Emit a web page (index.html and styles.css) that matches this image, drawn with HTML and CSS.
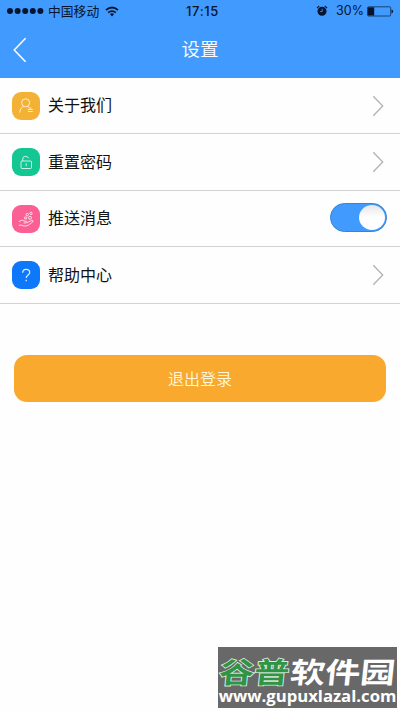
FILE: index.html
```html
<!DOCTYPE html>
<html lang="zh-CN">
<head>
<meta charset="utf-8">
<title>设置</title>
<link rel="stylesheet" href="styles.css">
</head>
<body>
<header class="header">
  <div class="status">
    <div class="status-left">
      <svg class="signal" width="37" height="8" viewBox="0 0 37 8"><circle cx="3" cy="4" r="3"/><circle cx="10.6" cy="4" r="3"/><circle cx="18.2" cy="4" r="3"/><circle cx="25.8" cy="4" r="3"/><circle cx="33.4" cy="4" r="3"/></svg>
      <span class="carrier">中国移动</span>
      <svg class="wifi" width="14" height="11" viewBox="0 0 14 11" fill="none" stroke="#06142f" stroke-width="1.7"><path d="M1 4Q7-1 13 4M3.2 6.6Q7 3.5 10.8 6.6"/><path d="M4.9 8.1Q7 6.5 9.1 8.1L7 10.4Z" fill="#06142f" stroke="none"/></svg>
    </div>
    <time class="clock">17:15</time>
    <div class="status-right">
      <svg class="alarm" width="12" height="12" viewBox="0 0 12 12" fill="none"><circle cx="6" cy="6.2" r="4.5" fill="#06142f"/><path d="M.9 3.2 3.2 1M11.1 3.2 8.8 1" stroke="#06142f" stroke-width="1.1"/><path d="M6.2 3.8V6.6H4.2" stroke="#419bff" stroke-width=".9"/></svg>
      <span class="percent">30%</span>
      <svg class="battery" width="27" height="11" viewBox="0 0 27 11"><rect x=".5" y=".8" width="23.2" height="9.2" rx="1" fill="none" stroke="#19406f"/><path d="M1 1.3h6.2v8.2H1z"/><path d="M24.5 3.6q1.6 0 1.6 1.8t-1.6 1.8z"/></svg>
    </div>
  </div>
  <nav class="navbar">
    <svg class="back" width="14" height="26" viewBox="0 0 14 26" fill="none" stroke="#fff" stroke-width="1.5"><path d="M12.6 1.2 1.2 13 12.6 24.8"/></svg>
    <h1 class="title">设置</h1>
  </nav>
</header>
<main>
  <ul class="list">
    <li class="row">
      <span class="icon icon-about"><svg width="28" height="28" viewBox="0 0 28 28"><circle cx="13.6" cy="10.8" r="4"/><path d="M7.6 20.6Q7.6 16.2 11.6 14.4M15.6 14.4 17.2 15.6M15.8 17.5h5M15.8 19.5h5M17 16h2.5"/></svg></span>
      <span class="label">关于我们</span>
      <svg class="chevron" width="12" height="22" viewBox="0 0 12 22"><path d="M1.3 1.3 10.7 11 1.3 20.7"/></svg>
    </li>
    <li class="row">
      <span class="icon icon-password"><svg width="28" height="28" viewBox="0 0 28 28"><rect x="9" y="13" width="10.5" height="7.5" rx="1"/><path d="M10.8 13V10.7Q10.8 8.3 13.6 8.3 16 8.3 16.3 10.3M14.2 15.2v3"/></svg></span>
      <span class="label">重置密码</span>
      <svg class="chevron" width="12" height="22" viewBox="0 0 12 22"><path d="M1.3 1.3 10.7 11 1.3 20.7"/></svg>
    </li>
    <li class="row">
      <span class="icon icon-push"><svg width="28" height="28" viewBox="0 0 28 28"><path d="M6.8 16.8 9 15.4Q10.6 14.8 12 16L14.4 16.3Q15.8 16.8 14.5 17.8L11.6 18M15.2 17.5 19.8 15.5Q21.8 15.4 20.7 17L16 20.4Q13.8 21.5 11.4 20.8L9 20 6.8 20.4"/><circle cx="13.6" cy="13" r="1.2"/><circle cx="18" cy="12.8" r="1.5"/><circle cx="15.2" cy="9.6" r="1.2"/><circle cx="19" cy="8.4" r="1.2"/></svg></span>
      <span class="label">推送消息</span>
      <span class="toggle"><span class="knob"></span></span>
    </li>
    <li class="row">
      <span class="icon icon-help"><svg width="28" height="28" viewBox="0 0 28 28"><path d="M10.7 11.7Q10.7 8.3 14.2 8.3T17.7 11.4C17.7 13.9 14.2 14 14.2 17.1M14.2 18.8v1.5" stroke-width="1.3"/></svg></span>
      <span class="label">帮助中心</span>
      <svg class="chevron" width="12" height="22" viewBox="0 0 12 22"><path d="M1.3 1.3 10.7 11 1.3 20.7"/></svg>
    </li>
  </ul>
  <button class="logout" type="button">退出登录</button>
</main>
<footer class="brand">
  <div class="brand-name"><span class="brand-green">谷普</span><span>软件园</span></div>
  <div class="brand-url">www.gupuxlazal.com</div>
</footer>
</body>
</html>
```
FILE: styles.css
```css
* { box-sizing: border-box; }
body {
  margin: 0;
  width: 400px;
  height: 711px;
  display: flex;
  flex-direction: column;
  overflow: hidden;
  background: #fefefe;
  color: #111;
  font-family: "Liberation Sans", "Noto Sans CJK SC", sans-serif;
}
svg { display: block; flex: none; }
.header { height: 78px; background: #419bff; }
.status {
  height: 22px;
  display: grid;
  grid-template-columns: 1fr auto 1fr;
  align-items: center;
  padding: 0 6px 0 7px;
  color: #06142f;
  fill: #06142f;
}
.status-left, .status-right { display: flex; align-items: center; }
.status-right { justify-content: flex-end; }
.carrier { margin-left: 4px; font-size: 12.8px; line-height: 20px; padding-top: 1px; }
.wifi { margin-left: 6px; }
.clock {
  font: 500 13px/20px Inter, sans-serif;
  letter-spacing: .6px;
  padding-left: 4px;
}
.percent { margin: 0 3px 0 8px; font: 12.5px/20px Inter, sans-serif; }
.navbar {
  height: 56px;
  display: grid;
  grid-template-columns: 1fr auto 1fr;
  align-items: center;
  padding: 0 13px;
}
.title {
  margin: 0;
  color: #fff;
  font-size: 18.5px;
  font-weight: 350;
  line-height: 28px;
}
.list { margin: 0; padding: 0; list-style: none; }
.row {
  height: 57px;
  display: flex;
  align-items: center;
  padding: 0 13px 0 12px;
  border-bottom: 1px solid #d2d2d2;
}
.row:nth-child(odd) { height: 56px; }
.icon { width: 28px; height: 28px; border-radius: 9px; }
.icon svg { fill: none; stroke: #fff; stroke-width: .9; stroke-opacity: .85; }
.icon-about { background: #f3b236; }
.icon-password { background: #12c792; }
.icon-push { background: #fb5f94; }
.icon-help { background: #0e78fa; }
.label { flex: 1; margin-left: 8px; padding-top: 1px; font-size: 16px; line-height: 24px; }
.chevron { margin-right: 3px; fill: none; stroke: #b2b2b2; stroke-width: 1.3; }
.toggle {
  width: 57px;
  height: 29px;
  display: flex;
  justify-content: flex-end;
  margin-bottom: 2px;
  padding: 1px;
  border: 1px solid #3784d2;
  border-radius: 15px;
  background: #419bff;
}
.knob {
  width: 26px;
  height: 25px;
  border-radius: 50%;
  background: linear-gradient(#e6e6e6, #fff 50%);
}
.logout {
  display: block;
  width: 372px;
  height: 47px;
  margin: 51px 14px 0;
  padding: 2px 0 0;
  border: 0;
  border-radius: 13px;
  background: #f8a92e;
  color: #fff8dc;
  font: 350 16px/24px "Liberation Sans", "Noto Sans CJK SC", sans-serif;
}
.brand {
  width: 179px;
  height: 61px;
  margin: auto 3px 3px auto;
  padding-top: 6px;
  background: #686868;
  color: #fff;
  white-space: nowrap;
}
.brand-name {
  display: flex;
  justify-content: center;
  gap: 1px;
  height: 35px;
  font: 700 35px/35px "Noto Sans CJK SC", sans-serif;
  transform: skewX(-6deg) scaleY(.82);
}
.brand-green {
  color: #2f9444;
  paint-order: stroke;
  -webkit-text-stroke: 2px #dcecdc;
}
.brand-url {
  text-align: center;
  font: 700 16.7px/16px "Open Sans", sans-serif;
}
```
